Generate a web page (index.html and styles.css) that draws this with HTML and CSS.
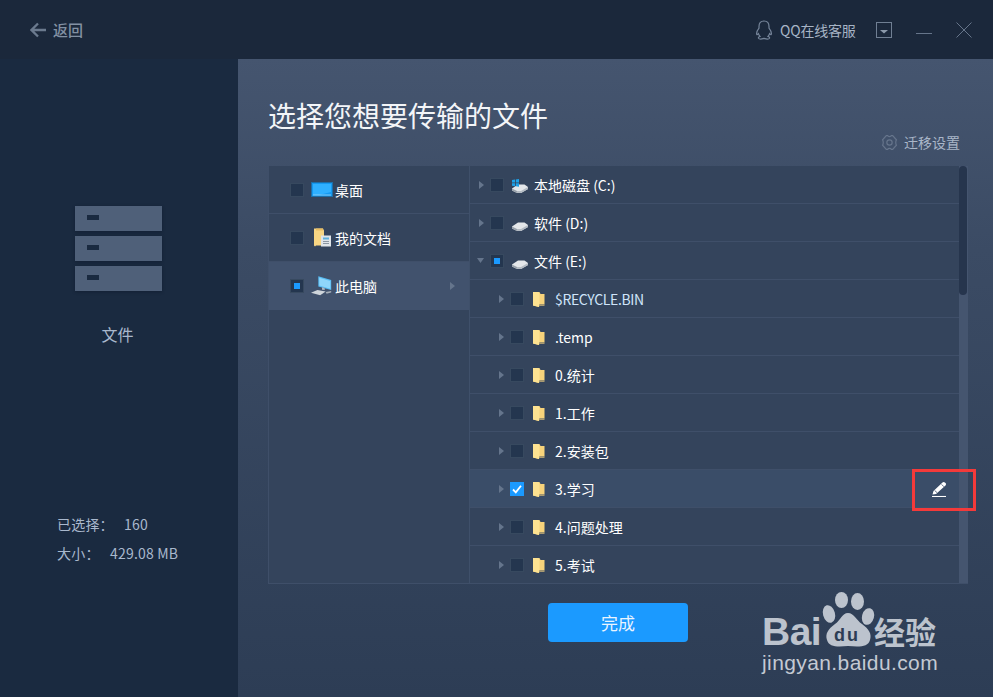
FILE: index.html
```html
<!DOCTYPE html>
<html lang="zh-CN">
<head>
<meta charset="utf-8">
<title>选择您想要传输的文件</title>
<link rel="stylesheet" href="styles.css">
</head>
<body>
<svg class="defs" width="0" height="0" aria-hidden="true">
  <defs>
    <symbol id="folder" viewBox="0 0 16 16">
      <path d="M1 1h6.500l1 2H12.500v10.500H7V16l-6-1.500z" fill="#f7d37b"/>
      <path d="M1 1h5.500l1 2v11l-.5 2-6-1.500z" fill="#fde291"/>
      <path d="M7 13.500h5.500V15H7z" fill="#a99a72"/>
    </symbol>
    <symbol id="drive" viewBox="0 0 16 16">
      <path d="M0 11.500 6 7.500h6.500l3.500 2.500v2L9 16H5l-5-2.500z" fill="#e4e7ea"/>
      <path d="M0 11.500 5 14v2l-5-2.500z" fill="#98a1ab"/>
      <path d="M5 14h4l7-4v2l-7 4H5z" fill="#b4bbc3"/>
    </symbol>
    <symbol id="drive-c" viewBox="0 0 16 16">
      <path d="M0 11.500 6 7.500h6.500l3.500 2.500v2L9 16H5l-5-2.500z" fill="#e4e7ea"/>
      <path d="M0 11.500 5 14v2l-5-2.500z" fill="#98a1ab"/>
      <path d="M5 14h4l7-4v2l-7 4H5z" fill="#b4bbc3"/>
      <path d="M0 3l3-.5V5.500H0zM3.800 2.400 7 2v3.500H3.800zM0 6.200h3v3L0 8.800zM3.800 6.200H7v3.500l-3.200-.4z" fill="#1ea1e8"/>
    </symbol>
    <symbol id="arrow-r" viewBox="0 0 5 8"><path d="M0 0l5 4-5 4z" fill="#65758c"/></symbol>
    <symbol id="arrow-d" viewBox="0 0 7 5"><path d="M0 0h7L3.500 5z" fill="#65758c"/></symbol>
  </defs>
</svg>

<div class="app">
  <header class="topbar">
    <div class="back">
      <svg class="back-icon" viewBox="0 0 16 16" aria-hidden="true"><path d="M8 1.500 1.500 8 8 14.500M1.500 8H16" fill="none" stroke="#6b7a8e" stroke-width="2.300"/></svg>
      <span>返回</span>
    </div>
    <div class="top-tools">
      <svg class="qq" viewBox="0 0 18 20" aria-hidden="true"><path d="M9 1C5.600 1 4 3.600 4 6.600v1.600C2.600 10 1.400 12 1.600 14c.2 1 .9.800 1.800-.3.300 1.100.9 2 1.600 2.700-1.100.400-1.800 1-1.500 1.800.5.900 3.500.800 5.500.2 2 .6 5 .7 5.500-.2.300-.8-.4-1.400-1.500-1.800.7-.7 1.300-1.600 1.600-2.700.9 1.100 1.600 1.300 1.800.3.200-2-1-4-2.400-5.800V6.600C14 3.600 12.400 1 9 1z" fill="none" stroke="#76859a" stroke-width="1.200"/></svg>
      <span class="qq-text">QQ在线客服</span>
      <svg class="win-drop" viewBox="0 0 16 16" aria-hidden="true"><rect x=".5" y=".5" width="15" height="15" fill="none" stroke="#707f93"/><path d="M4 8h8l-4 3.500z" fill="#8b99aa"/></svg>
      <svg class="win-min" viewBox="0 0 16 16" aria-hidden="true"><path d="M0 11.500h16" stroke="#66758a"/></svg>
      <svg class="win-close" viewBox="0 0 16 16" aria-hidden="true"><path d="M.5.500l15 15M15.500.500l-15 15" stroke="#66758a" fill="none"/></svg>
    </div>
  </header>

  <div class="body">
    <aside class="sidebar">
      <div class="bars">
        <div class="bar"><i></i></div>
        <div class="bar"><i></i></div>
        <div class="bar"><i></i></div>
      </div>
      <div class="side-title">文件</div>
      <div class="stats">
        <div class="stat"><span class="stat-a">已选择：</span><span>160</span></div>
        <div class="stat"><span class="stat-b">大小：</span><span>429.08 MB</span></div>
      </div>
    </aside>

    <main class="main">
      <h1 class="title">选择您想要传输的文件</h1>
      <div class="settings">
        <svg class="gear" viewBox="0 0 16 16" aria-hidden="true"><path d="M5 1.500h1.200c.6 1.300 3 1.300 3.600 0H11l3.500 4c-.8 1-.8 4 0 5L11 14.500H9.800c-.6-1.300-3-1.300-3.600 0H5l-3.500-4c.8-1 .8-4 0-5z" fill="none" stroke="#66758c" stroke-width="1.100"/><circle cx="8" cy="8" r="2.500" fill="none" stroke="#66758c" stroke-width="1.100"/></svg>
        <span>迁移设置</span>
      </div>

      <section class="panel">
        <div class="left">
          <div class="lrow">
            <span class="chk"></span>
            <svg class="licon" viewBox="0 0 22 15" aria-hidden="true"><rect x=".5" y=".5" width="21" height="14" fill="#1599f0" stroke="#1c6ea8"/><path d="M2 2h18v8L8 13H2z" fill="#2fb0ff"/><path d="M2 13h18" stroke="#9fd6f5" stroke-width=".8"/></svg>
            <span>桌面</span>
          </div>
          <div class="lrow">
            <span class="chk"></span>
            <svg class="licon" viewBox="0 0 22 20" aria-hidden="true"><path d="M3 1h9l1 2v15H5l-1 1-1-1z" fill="#f7d583"/><path d="M5 1h7v2H5z" fill="#e9bd63"/><rect x="10" y="8" width="10" height="11" fill="#dfe4e8"/><path d="M12 10h6v2h-6z" fill="#5fb1dc"/><path d="M12 14h6M12 16h6" stroke="#8b96a2"/></svg>
            <span>我的文档</span>
          </div>
          <div class="lrow lrow-on">
            <span class="chk chk-part"><i></i></span>
            <svg class="licon" viewBox="0 0 24 22" aria-hidden="true"><path d="M8 1l14 4v11L8 12z" fill="#58bdf4"/><path d="M9 2.500l12 3.500v8.500L9 11z" fill="#8fd6fb"/><path d="M12 13l3 1v2l-3-.5z" fill="#aeb7c1"/><path d="M0 19l7-3 9 1.500-6 4z" fill="#cfd5db"/><path d="M16 18l6-1v1.500l-5 1.500z" fill="#a5aeb8"/></svg>
            <span>此电脑</span>
            <svg class="arrow larrow"><use href="#arrow-r"/></svg>
          </div>
        </div>

        <div class="right">
          <div class="row"><svg class="arrow"><use href="#arrow-r"/></svg><span class="chk"></span><svg class="ficon"><use href="#drive-c"/></svg><span>本地磁盘 (C:)</span></div>
          <div class="row"><svg class="arrow"><use href="#arrow-r"/></svg><span class="chk"></span><svg class="ficon"><use href="#drive"/></svg><span>软件 (D:)</span></div>
          <div class="row"><svg class="arrow-down"><use href="#arrow-d"/></svg><span class="chk chk-part"><i></i></span><svg class="ficon"><use href="#drive"/></svg><span>文件 (E:)</span></div>
          <div class="row sub"><svg class="arrow"><use href="#arrow-r"/></svg><span class="chk"></span><svg class="ficon"><use href="#folder"/></svg><span class="sys">$RECYCLE.BIN</span></div>
          <div class="row sub"><svg class="arrow"><use href="#arrow-r"/></svg><span class="chk"></span><svg class="ficon"><use href="#folder"/></svg><span>.temp</span></div>
          <div class="row sub"><svg class="arrow"><use href="#arrow-r"/></svg><span class="chk"></span><svg class="ficon"><use href="#folder"/></svg><span>0.统计</span></div>
          <div class="row sub"><svg class="arrow"><use href="#arrow-r"/></svg><span class="chk"></span><svg class="ficon"><use href="#folder"/></svg><span>1.工作</span></div>
          <div class="row sub"><svg class="arrow"><use href="#arrow-r"/></svg><span class="chk"></span><svg class="ficon"><use href="#folder"/></svg><span>2.安装包</span></div>
          <div class="row sub row-on"><svg class="arrow"><use href="#arrow-r"/></svg><span class="chk chk-on"><svg viewBox="0 0 14 14" aria-hidden="true"><path d="M3 7.500l2.800 2.800L11 3.800" fill="none" stroke="#fff" stroke-width="1.800"/></svg></span><svg class="ficon"><use href="#folder"/></svg><span>3.学习</span>
            <svg class="pencil" viewBox="0 0 16 16" aria-hidden="true"><path d="M1.500 13.500l1-3.500 9-8.500c.7-.7 1.700-.7 2.400 0l.6.6c.7.700.7 1.700 0 2.400L5 13z" fill="#fff"/><path d="M3.600 9.400l2.600 2.400M10.600 3.400l2.400 2.400" stroke="#3a4b64" stroke-width=".8"/><path d="M1 15.500h14" stroke="#fff" stroke-width="1.100"/></svg>
          </div>
          <div class="row sub"><svg class="arrow"><use href="#arrow-r"/></svg><span class="chk"></span><svg class="ficon"><use href="#folder"/></svg><span>4.问题处理</span></div>
          <div class="row sub"><svg class="arrow"><use href="#arrow-r"/></svg><span class="chk"></span><svg class="ficon"><use href="#folder"/></svg><span>5.考试</span></div>
          <div class="scroll"><div class="thumb"></div></div>
        </div>
      </section>

      <div class="actions"><button class="done" type="button">完成</button></div>
    </main>
  </div>

  <div class="redbox"></div>

  <div class="mark">
    <svg class="paw" viewBox="0 0 58 60" aria-hidden="true">
      <ellipse cx="21.500" cy="10" rx="6.500" ry="8" fill="#bcc3cd"/>
      <ellipse cx="37.500" cy="11.500" rx="6.500" ry="8.500" fill="#bcc3cd"/>
      <ellipse cx="9" cy="24" rx="6" ry="9" transform="rotate(-15 9 24)" fill="#bcc3cd"/>
      <ellipse cx="48" cy="26.500" rx="6" ry="8.500" transform="rotate(15 48 26.500)" fill="#bcc3cd"/>
      <path d="M28 23c6 0 8 7 14 11 7 5 10 10 8 16-2 7-10 7-22 6-11 1-19 1-21-6-2-6 1-11 8-16 6-4 7-11 13-11z" fill="#bcc3cd"/>
    </svg>
    <span class="m-bai">Bai</span>
    <span class="m-du">du</span>
    <span class="m-jy">经验</span>
    <span class="m-url">jingyan.baidu.com</span>
  </div>
</div>
</body>
</html>
```
FILE: styles.css
```css
* { box-sizing: border-box; }
html, body { margin: 0; height: 100%; }
body {
  background: #1b283b;
  font-family: "Noto Sans CJK SC", "Liberation Sans", sans-serif;
  font-size: 14px;
  overflow: hidden;
}
.defs { position: absolute; }

.app {
  position: relative;
  width: 993px;
  height: 697px;
  display: flex;
  flex-direction: column;
  overflow: hidden;
}

/* top bar */
.topbar {
  height: 59px;
  flex: none;
  background: #1b283b;
  display: flex;
  align-items: center;
  justify-content: space-between;
  padding: 0 21px 0 30px;
}
.back {
  display: flex;
  align-items: center;
  gap: 7px;
  color: #8391a3;
  font-size: 15px;
  font-weight: 500;
  line-height: 20px;
}
.back-icon { width: 16px; height: 16px; }
.top-tools {
  display: flex;
  align-items: center;
  color: #a7b4c5;
  line-height: 20px;
}
.qq { width: 18px; height: 20px; margin-right: 7px; }
.qq-text { width: 96px; letter-spacing: -0.2px; }
.win-drop, .win-min, .win-close { width: 16px; height: 16px; }
.win-min { margin-left: 24px; }
.win-close { margin-left: 24px; }

.body { flex: 1; display: flex; min-height: 0; }

/* sidebar */
.sidebar {
  width: 238px;
  flex: none;
  background: #1a2a40;
  display: flex;
  flex-direction: column;
  align-items: flex-start;
  padding: 147px 0 0 75px;
  color: #a9b8cd;
}
.bars { display: flex; flex-direction: column; gap: 5px; }
.bar {
  width: 87px;
  height: 25px;
  background: #4f6079;
  box-shadow: 0 1px 3px rgba(10, 20, 35, .45);
  padding: 9px 0 0 12px;
}
.bar i { display: block; width: 12px; height: 5px; background: #1a2a40; }
.side-title {
  width: 85px;
  text-align: center;
  font-size: 16px;
  line-height: 24px;
  margin-top: 31px;
}
.stats { margin: 168px 0 0 -18px; line-height: 20px; }
.stat { display: flex; height: 29px; letter-spacing: .2px; }
.stat-a { width: 67px; }
.stat-b { width: 53px; }

/* main */
.main {
  flex: 1;
  min-width: 0;
  padding: 0 25px 0 30px;
  background: linear-gradient(180deg, #45556f 0%, #3b4b64 30%, #2d3d55 100%);
  display: flex;
  flex-direction: column;
}
.title {
  margin: 36px 0 0;
  font-size: 28px;
  line-height: 40px;
  font-weight: 400;
  color: #f3f5f8;
  height: 40px;
}
.settings {
  align-self: flex-end;
  margin: -5px 8px 0 0;
  height: 24px;
  display: flex;
  align-items: center;
  gap: 6px;
  color: #a9b6c8;
  line-height: 20px;
}
.gear { width: 17px; height: 17px; }

/* panel */
.panel {
  height: 418px;
  flex: none;
  margin-top: 12px;
  display: flex;
  background: #34445c;
  border-left: 1px solid #3f4f69;
  border-bottom: 1px solid #3f4f69;
  overflow: hidden;
  color: #fff;
}
.left {
  width: 201px;
  flex: none;
  border-right: 1px solid #3f506a;
}
.lrow {
  height: 48px;
  display: flex;
  align-items: center;
  padding: 0 0 0 21px;
  border-bottom: 1px solid #3f4f69;
  line-height: 20px;
  position: relative;
}
.lrow-on { background: #41526d; border-bottom-color: #41526d; }
.licon { width: 22px; height: 21px; margin: 0 2px 0 7px; flex: none; }
.larrow { position: absolute; left: 180px; top: 20px; }

.right { flex: 1; position: relative; min-width: 0; }
.row {
  height: 38px;
  display: flex;
  align-items: center;
  padding-left: 8px;
  border-bottom: 1px solid #3f4f69;
  line-height: 20px;
  white-space: nowrap;
}
.sub { padding-left: 28px; }
.row-on { background: #3a4d68; }
.sys { color: #cfe4fa; letter-spacing: -0.35px; }

.arrow { width: 5px; height: 8px; margin: 0 6px 0 1px; flex: none; }
.arrow-down { width: 7px; height: 5px; margin: 0 6px 0 -1px; flex: none; }
.chk {
  width: 14px;
  height: 14px;
  flex: none;
  background: #24364f;
  border: 1px solid #37495f;
  display: flex;
  align-items: center;
  justify-content: center;
}
.chk i { display: block; width: 6px; height: 6px; background: #1b9aff; }
.chk-on { background: #1b9aff; border-color: #1b9aff; }
.chk-on svg { width: 14px; height: 14px; flex: none; }
.ficon { width: 16px; height: 16px; flex: none; margin: 0 6px 0 8px; }
.sub .ficon { margin-right: 7px; }

.pencil { width: 16px; height: 16px; margin-left: auto; margin-right: 21px; }

.scroll {
  position: absolute;
  top: 0;
  bottom: 0;
  right: 0;
  width: 9px;
  background: #45556f;
}
.thumb { height: 129px; width: 8px; background: #26354d; border-radius: 4px; }

.actions { display: flex; justify-content: center; padding-top: 19px; }
.done {
  width: 140px;
  height: 39px;
  border: 0;
  border-radius: 4px;
  background: #1b9aff;
  color: #e9f4ff;
  font-family: inherit;
  font-size: 17px;
  padding: 0;
}

/* annotation */
.redbox {
  position: absolute;
  left: 912px;
  top: 469px;
  width: 64px;
  height: 42px;
  border: 3px solid #f43a3a;
}

/* watermark */
.mark { position: absolute; left: 760px; top: 590px; width: 190px; height: 95px; color: #bcc3cd; }
.paw { position: absolute; left: 60px; top: 0; width: 58px; height: 60px; }
.mark span { position: absolute; white-space: nowrap; }
.m-bai { left: 2px; top: 20px; font: 700 39px/44px "Liberation Sans", sans-serif; letter-spacing: -0.5px; }
.m-du { left: 74px; top: 34px; font: 700 18px/22px "Liberation Sans", sans-serif; letter-spacing: 2px; color: #2d3d55; }
.m-jy { left: 114px; top: 23px; font: 700 31px/36px "Noto Sans CJK SC", sans-serif; }
.m-url { left: 2px; top: 60px; font: 400 21px/26px "Liberation Sans", sans-serif; letter-spacing: .4px; color: #c4cad3; }
```
